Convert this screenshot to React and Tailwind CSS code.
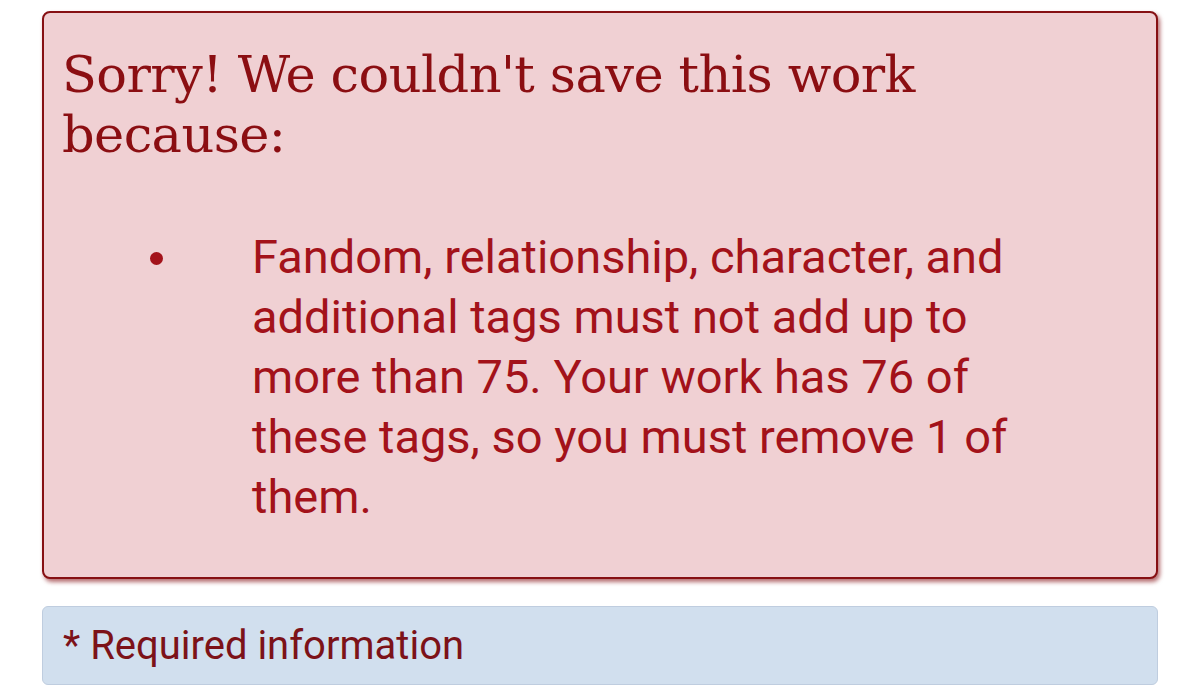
import React from "react";

export default function App() {
  return (
    <div className="w-[1200px] h-[686px] bg-white overflow-hidden px-[42px] pt-[11px]">
      {/* Error box */}
      <div className="h-[568px] rounded-[8px] border-2 border-[#861013] bg-[#f0d0d3] shadow-[2px_3px_4px_rgba(130,10,15,0.6)] pl-[18px] pr-6 pt-[32px]">
        <h2 className="font-['DejaVu_Serif',serif] text-[51px] leading-[60px] text-[#8b0e12] tracking-[-0.6px]">
          Sorry! We couldn't save this work
          <br />
          because:
        </h2>
        <ul className="mt-[62px] pl-[190px] font-['Roboto',sans-serif] text-[47px] leading-[60px] text-[#a3121a]">
          <li className="relative w-[770px]">
            <span className="absolute left-[-102px] top-[25px] h-[13px] w-[13px] rounded-full bg-[#a3121a]" />
            Fandom, relationship, character, and additional tags must not add up to more than 75. Your work has 76 of these tags, so you must remove 1 of them.
          </li>
        </ul>
      </div>

      {/* Required info */}
      <div className="mt-[27px] h-[79px] rounded-[6px] border border-[#bfcddf] bg-[#d1dfee] pl-[20px] flex items-center font-['Roboto',sans-serif] text-[40px] text-[#7c1218]">
        * Required information
      </div>
    </div>
  );
}
